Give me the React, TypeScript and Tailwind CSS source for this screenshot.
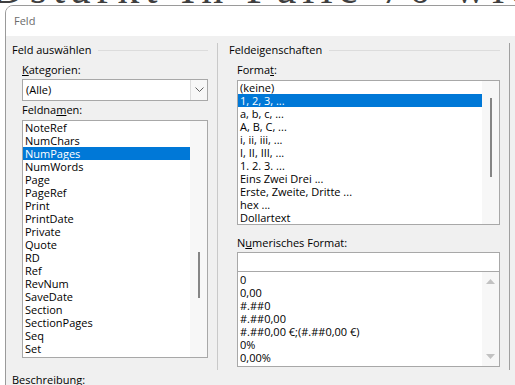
const feldnamen = [
  "NoteRef",
  "NumChars",
  "NumPages",
  "NumWords",
  "Page",
  "PageRef",
  "Print",
  "PrintDate",
  "Private",
  "Quote",
  "RD",
  "Ref",
  "RevNum",
  "SaveDate",
  "Section",
  "SectionPages",
  "Seq",
  "Set",
];

const formate = [
  "(keine)",
  "1, 2, 3, ...",
  "a, b, c, ...",
  "A, B, C, ...",
  "i, ii, iii, ...",
  "I, II, III, ...",
  "1. 2. 3. ...",
  "Eins Zwei Drei ...",
  "Erste, Zweite, Dritte ...",
  "hex ...",
  "Dollartext",
];

const zahlen = ["0", "0,00", "#.##0", "#.##0,00", "#.##0,00 €;(#.##0,00 €)", "0%", "0,00%"];

function GroupHeading({ title }: { title: string }) {
  return (
    <div className="flex items-center h-[16px] leading-[16px]">
      <span>{title}</span>
      <div className="flex-1 h-px bg-[#dcdcdc] ml-[7px]" />
    </div>
  );
}

function Row({ text, selected }: { text: string; selected?: boolean }) {
  return (
    <div
      className={
        "h-[13px] leading-[13px] pl-[2px] whitespace-nowrap " +
        (selected ? "bg-[#0078d7] text-white" : "")
      }
    >
      {text}
    </div>
  );
}

export default function App() {
  return (
    <div
      className="relative w-[515px] h-[385px] overflow-hidden bg-white text-[11px] text-black"
      style={{ fontFamily: '"Open Sans", "Noto Sans", sans-serif' }}
    >
      {/* Word document behind the dialog */}
      <div
        className="absolute left-[-8px] top-[-36px] whitespace-nowrap text-[44px] leading-[50px] text-[#3f3f3f] tracking-[6px]"
        style={{ fontFamily: '"Liberation Serif", serif' }}
      >
        Dstarkt In Falle 70 wich
      </div>
      <div
        className="absolute left-[-15px] top-[172px] text-[30px] leading-[34px] text-[#777]"
        style={{ fontFamily: '"Liberation Serif", serif' }}
      >
        ?
      </div>

      {/* Dialog */}
      <div className="absolute left-[5px] top-[5px] w-[530px] h-[400px] rounded-tl-[8px] border border-[#9a9a9a] bg-[#f0f0f0] overflow-hidden">
        <div className="h-[30px] bg-white flex items-center pl-[8px] text-[#6b6b6b]">Feld</div>

        <div className="flex">
          {/* Feld auswählen */}
          <div className="ml-[6px] w-[196px] pt-[6px]">
            <GroupHeading title="Feld auswählen" />
            <div className="pl-[10px]">
              <div className="mt-[4px] h-[16px] leading-[16px]">
                <span className="underline">K</span>ategorien:
              </div>
              <div className="mt-[1px] h-[22px] flex border border-[#a8a8a8] bg-white">
                <div className="flex-1 pl-[3px] leading-[20px]">(Alle)</div>
                <div className="w-[17px] border-l border-[#dcdcdc] bg-[#f7f7f7] flex items-center justify-center">
                  <svg width="9" height="6" viewBox="0 0 9 6">
                    <path d="M0.5 0.5 L4.5 4.5 L8.5 0.5" fill="none" stroke="#606060" strokeWidth="1" />
                  </svg>
                </div>
              </div>
              <div className="mt-[1px] h-[16px] leading-[16px]">
                Feldna<span className="underline">m</span>en:
              </div>
              <div className="mt-[2px] h-[238px] flex border border-[#a8a8a8] bg-white">
                <div className="flex-1">
                  {feldnamen.map((f) => (
                    <Row key={f} text={f} selected={f === "NumPages"} />
                  ))}
                </div>
                <div className="w-[17px] bg-[#f7f7f7] flex justify-center">
                  <div className="w-[2px] h-[46px] mt-[131px] bg-[#858585]" />
                </div>
              </div>
            </div>
            <div className="mt-[14px] h-[16px] leading-[16px]">Beschreibung:</div>
          </div>

          <div className="ml-[9px] mt-[7px] w-px h-[327px] bg-[#c9c9c9]" />

          {/* Feldeigenschaften */}
          <div className="ml-[11px] w-[271px] pt-[6px]">
            <GroupHeading title="Feldeigenschaften" />
            <div className="pl-[8px]">
              <div className="mt-[4px] h-[16px] leading-[16px]">
                Forma<span className="underline">t</span>:
              </div>
              <div className="mt-[2px] h-[145px] flex border border-[#a8a8a8] bg-white">
                <div className="flex-1">
                  {formate.map((f) => (
                    <Row key={f} text={f} selected={f === "1, 2, 3, ..."} />
                  ))}
                </div>
                <div className="w-[17px] bg-[#f7f7f7] flex justify-center">
                  <div className="w-[2px] h-[79px] mt-[17px] bg-[#858585]" />
                </div>
              </div>
              <div className="mt-[10px] h-[16px] leading-[16px]">
                N<span className="underline">u</span>merisches Format:
              </div>
              <div className="mt-[1px] h-[20px] border border-[#a8a8a8] bg-white" />
              <div className="h-[95px] flex border border-t-0 border-[#a8a8a8] bg-white">
                <div className="flex-1 pt-[1px]">
                  {zahlen.map((z) => (
                    <Row key={z} text={z} />
                  ))}
                </div>
                <div className="w-[17px] bg-[#f7f7f7] flex flex-col items-center justify-between py-[7px]">
                  <svg width="9" height="5" viewBox="0 0 9 5">
                    <path d="M0 5 L4.5 0 L9 5 Z" fill="#c2c2c2" />
                  </svg>
                  <svg width="9" height="5" viewBox="0 0 9 5">
                    <path d="M0 0 L4.5 5 L9 0 Z" fill="#c2c2c2" />
                  </svg>
                </div>
              </div>
            </div>
          </div>

          <div className="ml-[9px] mt-[7px] w-px h-[327px] bg-[#a0a0a0]" />
        </div>
      </div>
    </div>
  );
}
